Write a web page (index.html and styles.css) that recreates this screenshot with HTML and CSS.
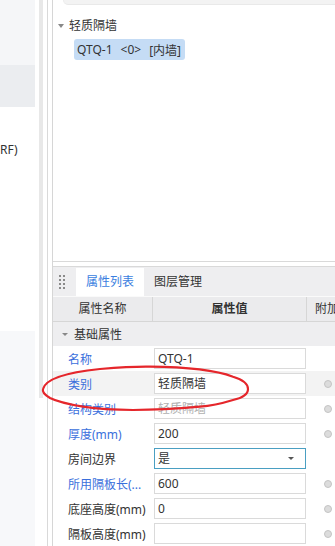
FILE: index.html
```html
<!DOCTYPE html>
<html lang="zh-CN">
<head>
<meta charset="utf-8">
<title>属性列表</title>
<link rel="stylesheet" href="styles.css">
</head>
<body>
<div class="app">
  <aside class="left">
    <div class="band band-a"></div>
    <div class="band band-b"></div>
    <div class="band band-c"><span class="cut">RF)</span></div>
    <div class="band band-d"></div>
  </aside>
  <div class="gutter">
    <div class="scroll"></div>
    <div class="vline"></div>
  </div>
  <main class="main">
    <section class="tree">
      <div class="searchbox"></div>
      <div class="node"><span class="caret"></span><span class="node-text">轻质隔墙</span></div>
      <div class="leaf"><span>QTQ-1</span><span class="sp">&lt;0&gt;</span><span class="sp">[内墙]</span></div>
    </section>
    <section class="props">
      <div class="tabs">
        <div class="handle"><i></i><i></i><i></i><i></i><i></i><i></i><i></i><i></i></div>
        <div class="tab active">属性列表</div>
        <div class="tab">图层管理</div>
      </div>
      <div class="grid head">
        <div class="hc">属性名称</div>
        <div class="hc strong">属性值</div>
        <div class="hc extra">附加</div>
      </div>
      <div class="section"><span class="caret small"></span><span>基础属性</span></div>
      <div class="grid row">
        <div class="lbl blue">名称</div>
        <div class="val"><div class="box">QTQ-1</div></div>
        <div class="add"></div>
      </div>
      <div class="grid row hl">
        <div class="lbl blue">类别</div>
        <div class="val"><div class="box">轻质隔墙</div></div>
        <div class="add"><span class="radio"></span></div>
      </div>
      <div class="grid row">
        <div class="lbl blue">结构类别</div>
        <div class="val"><div class="box dim">轻质隔墙</div></div>
        <div class="add"><span class="radio"></span></div>
      </div>
      <div class="grid row">
        <div class="lbl blue">厚度(mm)</div>
        <div class="val"><div class="box">200</div></div>
        <div class="add"><span class="radio"></span></div>
      </div>
      <div class="grid row">
        <div class="lbl">房间边界</div>
        <div class="val"><div class="box select"><span>是</span><span class="drop"></span></div></div>
        <div class="add"></div>
      </div>
      <div class="grid row">
        <div class="lbl blue">所用隔板长(...</div>
        <div class="val"><div class="box">600</div></div>
        <div class="add"><span class="radio"></span></div>
      </div>
      <div class="grid row">
        <div class="lbl">底座高度(mm)</div>
        <div class="val"><div class="box">0</div></div>
        <div class="add"><span class="radio"></span></div>
      </div>
      <div class="grid row">
        <div class="lbl">隔板高度(mm)</div>
        <div class="val"><div class="box"></div></div>
        <div class="add"><span class="radio"></span></div>
      </div>
    </section>
  </main>
  <svg class="mark" width="335" height="546" viewBox="0 0 335 546">
    <path d="M43,389 C46,378 70,372 100,369 C125,367 140,366.5 150,366.7 C180,367 215,370 233,376.7 C244,380 248,385 248,389 C248,395 242,398 233,400 C220,404 210,406 200,406.7 C180,408.5 155,410 133,410 C110,410 95,408.5 83,406.7 C70,404.5 58,402 50,398 C45,395 42,392 43,389 Z" fill="none" stroke="#e5262b" stroke-width="2.2"/>
  </svg>
</div>
</body>
</html>
```

FILE: styles.css
```css
* { box-sizing: border-box; }
html, body { margin: 0; padding: 0; background: #fff; }
body {
  width: 335px;
  height: 546px;
  overflow: hidden;
  font-family: "Noto Sans", "Noto Sans CJK SC", sans-serif;
  font-size: 12px;
  color: #333;
}
.app {
  position: relative;
  display: flex;
  width: 335px;
  height: 546px;
  overflow: hidden;
}
.left {
  width: 35px;
  flex: none;
  display: flex;
  flex-direction: column;
  overflow: hidden;
}
.band-a { height: 65px; background: #f5f6f8; }
.band-b { height: 42px; background: #ebedf0; }
.band-c { height: 224px; background: #fff; padding-top: 35px; }
.band-d { flex: 1; background: #f7f8fa; }
.cut { display: block; line-height: 16px; white-space: nowrap; color: #333; }
.gutter {
  width: 17px;
  flex: none;
  display: flex;
  padding-left: 4px;
  gap: 4px;
}
.scroll { width: 4px; height: 398px; background: #e8e8e8; }
.vline { width: 1px; background: #d9d9d9; }
.main {
  width: 283px;
  flex: none;
  border-left: 1px solid #d6d6d6;
  display: flex;
  flex-direction: column;
  overflow: hidden;
}
.tree {
  height: 262px;
  flex: none;
  border-bottom: 1px solid #d9d9d9;
}
.searchbox {
  margin-left: 10px;
  height: 5px;
  background: #f3f3f3;
  border-bottom: 1px solid #e9e9e9;
  border-left: 1px solid #ececec;
  border-radius: 0 0 0 8px;
}
.node {
  display: flex;
  align-items: center;
  margin-top: 14px;
  height: 14px;
  padding-left: 5px;
  gap: 5px;
}
.caret {
  width: 0;
  height: 0;
  border-left: 3px solid transparent;
  border-right: 3px solid transparent;
  border-top: 4px solid #888;
}
.node-text { line-height: 14px; }
.leaf {
  display: inline-flex;
  align-items: center;
  margin-top: 6px;
  margin-left: 21px;
  height: 21px;
  padding: 0 4px 0 3px;
  background: #c5dcf5;
  border-radius: 3px;
  white-space: nowrap;
}
.leaf .sp { margin-left: 8px; }
.props {
  margin-top: 4px;
  border-top: 1px solid #d9d9d9;
  flex: 1;
  overflow: hidden;
}
.tabs {
  height: 30px;
  display: flex;
  align-items: flex-end;
  background: #eeeef0;
  border-bottom: 1px solid #fafafa;
  padding-left: 6px;
}
.handle {
  align-self: center;
  display: grid;
  grid-template-columns: 2px 2px;
  column-gap: 2px;
  row-gap: 2px;
  margin-right: 11px;
}
.handle i { width: 2px; height: 2px; background: #8a8a8a; display: block; }
.tab {
  height: 28px;
  line-height: 28px;
  padding: 0 10px;
  white-space: nowrap;
}
.tab.active { background: #fff; color: #3a7ee0; }
.grid {
  display: grid;
  grid-template-columns: 100px 154px 60px;
  width: 314px;
}
.head {
  height: 25px;
  background: #ebebed;
  border-bottom: 1px solid #d6d6d6;
}
.hc {
  line-height: 24px;
  text-align: center;
  border-right: 1px solid #d6d6d6;
  white-space: nowrap;
}
.hc.strong { font-weight: bold; }
.hc.extra { text-align: left; padding-left: 8px; border-right: none; }
.section {
  height: 24px;
  display: flex;
  align-items: center;
  background: #eeeef0;
  padding-left: 9px;
  gap: 6px;
}
.caret.small { border-left-width: 3px; border-right-width: 3px; border-top-width: 3px; }
.row { height: 25px; align-items: center; }
.row.hl { background: #f3f3f3; }
.lbl {
  padding-left: 15px;
  white-space: nowrap;
  overflow: hidden;
}
.lbl.blue { color: #3a6fdc; }
.val { padding-left: 1px; }
.box {
  width: 152px;
  height: 21px;
  border: 1px solid #dadada;
  background: #fff;
  padding-left: 3px;
  line-height: 19px;
  white-space: nowrap;
}
.box.dim { color: #b0b0b0; }
.box.select {
  border-color: #4a9fc2;
  display: flex;
  justify-content: space-between;
  align-items: center;
  padding-right: 11px;
}
.drop {
  width: 0;
  height: 0;
  border-left: 3px solid transparent;
  border-right: 3px solid transparent;
  border-top: 3px solid #555;
}
.add { padding-left: 17px; display: flex; align-items: center; }
.radio {
  width: 8px;
  height: 8px;
  border-radius: 50%;
  background: #dcdcdc;
  border: 1px solid #c4c4c4;
}
.mark {
  position: absolute;
  left: 0;
  top: 0;
  pointer-events: none;
}
```
